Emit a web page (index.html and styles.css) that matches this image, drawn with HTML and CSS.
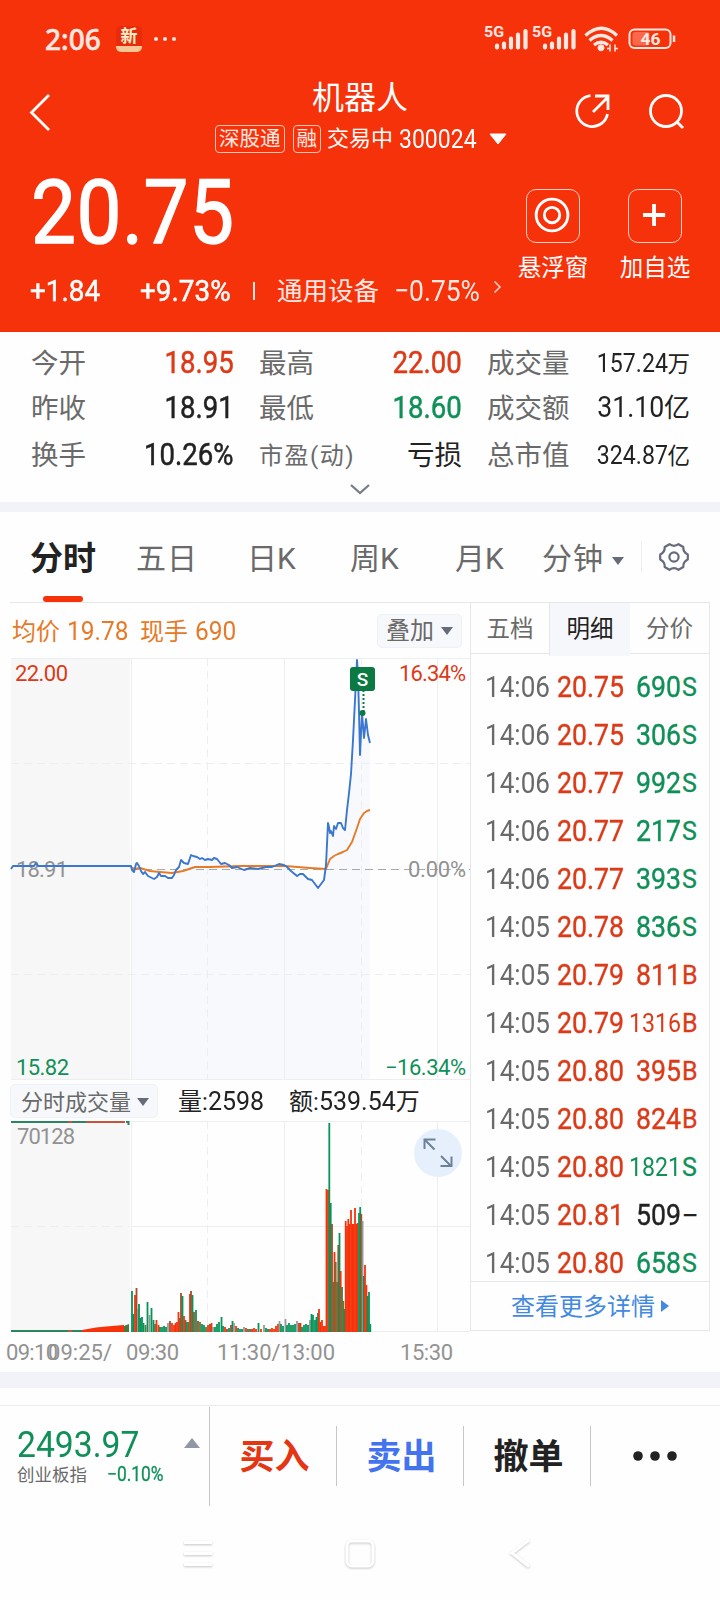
FILE: index.html
```html
<!DOCTYPE html>
<html lang="zh-CN">
<head>
    <meta charset="UTF-8">
    <meta name="viewport" content="width=device-width, initial-scale=1.0">
    <title>机器人 300024</title>
    <link rel="stylesheet" href="styles.css">
</head>
<body>
    <header class="header">
        <div class="status">
            <span class="clock">2:06</span>
            <span class="app-badge">新</span>
            <svg class="status-dots" width="24" height="6" viewBox="0 0 24 6"><circle cx="3" cy="3" r="2"/><circle cx="12" cy="3" r="2"/><circle cx="21" cy="3" r="2"/></svg>
            <svg class="status-icons" width="196" height="30" viewBox="0 0 196 30">
                <g id="signal">
                    <text x="0" y="13" font-size="14.500" font-weight="700" textLength="20" lengthAdjust="spacingAndGlyphs">5G</text>
                    <path d="M13 23.500v-2M20 23.500v-4M27 23.500v-9M34 23.500v-13M41.500 23.500v-16.500" stroke-width="4.200" stroke-linecap="round"/>
                </g>
                <use href="#signal" x="48"/>
                <g fill="none" stroke-width="3.300">
                    <path d="M101.500 11.500Q117.500-3 133 11.500M105.500 16.500q11.500-10 23 0M110 21q7-5.500 14 0"/>
                </g>
                <circle cx="117" cy="23.800" r="3"/>
                <path d="M126 20.500v7M131 20.500v7M123 24.500h3M131 24.500h3" stroke-width="1.500"/>
                <rect x="145.500" y="5.500" width="41" height="18.500" rx="5" fill="none" stroke-width="2"/>
                <rect x="148.500" y="8" width="17" height="13.500" rx="3" stroke="none" fill-opacity=".3"/>
                <path d="M190 11.500v6.500" stroke-width="2.500"/>
                <text x="156.500" y="21" font-size="17" font-weight="700" textLength="20" lengthAdjust="spacingAndGlyphs">46</text>
            </svg>
        </div>

        <div class="titlebar">
            <svg class="back" width="24" height="40" viewBox="0 0 24 40"><path d="M22 3 4.500 20.500 22 38"/></svg>
            <div class="title">
                <h1>机器人</h1>
                <div class="subtitle">
                    <span class="tag">深股通</span>
                    <span class="tag">融</span>
                    <span class="state">交易中</span>
                    <span class="code">300024</span>
                    <svg width="18" height="12" viewBox="0 0 18 12"><path d="M1 1h16l-8 10z" fill="#fff" stroke="#fff" stroke-linejoin="round"/></svg>
                </div>
            </div>
            <div class="title-icons">
                <svg width="36" height="36" viewBox="0 0 36 36"><path d="M15.500 1.700A15.500 15.500 0 1 0 32.500 20M18 18 32 4M20 2h13v14"/></svg>
                <svg width="36" height="36" viewBox="0 0 36 36"><circle cx="17" cy="17" r="15.500"/><path d="m28 28 6 6"/></svg>
            </div>
        </div>

        <div class="quote">
            <div class="quote-main">
                <div class="price">20.75</div>
                <div class="change">
                    <span class="up1"><b class="num">+1.84</b></span>
                    <span class="up2"><b class="num">+9.73%</b></span>
                    <i class="bar"></i>
                    <span class="sector">通用设备</span>
                    <span class="sector-pct"><span class="num">−0.75%</span></span>
                    <svg width="9" height="14" viewBox="0 0 9 14"><path d="m1.500 1.500 5.500 5.500-5.500 5.500" fill="none" stroke="#ffd0c6" stroke-width="1.600"/></svg>
                </div>
            </div>
            <div class="actions">
                <div class="action">
                    <svg width="54" height="54" viewBox="0 0 54 54"><circle cx="26" cy="26" r="16.500"/><circle cx="26" cy="26" r="8"/></svg>
                    <span>悬浮窗</span>
                </div>
                <div class="action">
                    <svg width="54" height="54" viewBox="0 0 54 54"><path d="M14.500 26h23M26 14.500v23" stroke-width="4"/></svg>
                    <span>加自选</span>
                </div>
            </div>
        </div>
    </header>

    <section class="stats">
        <div class="stat"><label>今开</label><b class="num red">18.95</b></div>
        <div class="stat"><label>最高</label><b class="num red">22.00</b></div>
        <div class="stat"><label>成交量</label><span class="small"><i class="num">157.24</i>万</span></div>
        <div class="stat"><label>昨收</label><b class="num">18.91</b></div>
        <div class="stat"><label>最低</label><b class="num green">18.60</b></div>
        <div class="stat"><label>成交额</label><span class="mid"><i class="num">31.10</i>亿</span></div>
        <div class="stat"><label>换手</label><b class="num">10.26%</b></div>
        <div class="stat"><label class="pe">市盈(动)</label><span>亏损</span></div>
        <div class="stat"><label>总市值</label><span class="small"><i class="num">324.87</i>亿</span></div>
    </section>
    <div class="expand">
        <svg width="22" height="12" viewBox="0 0 22 12"><path d="m2 2 9 8 9-8" fill="none" stroke="#777b88" stroke-width="2.200"/></svg>
    </div>

    <nav class="tabs">
        <span class="tab active">分时</span>
        <span class="tab">五日</span>
        <span class="tab">日K</span>
        <span class="tab">周K</span>
        <span class="tab">月K</span>
        <span class="tab minute">分钟 <i class="caret"></i></span>
        <span class="gear">
            <svg width="30" height="30" viewBox="0 0 30 30" fill="none" stroke="#666b7a" stroke-width="2.200" stroke-linejoin="round">
                <path d="M10.500 2.200q4.500 3.200 9 0l4.800 2.800q-.4 5.200 4.500 7.500v5q-4.900 2.300-4.500 7.500l-4.800 2.800q-4.500-3.200-9 0L5.700 25q.4-5.200-4.500-7.500v-5Q6.100 10.200 5.700 5z"/>
                <circle cx="15" cy="15" r="4.600"/>
            </svg>
        </span>
    </nav>

    <main class="board">
        <div class="charts">
            <div class="chart-head">
                <span class="avg">均价 <i class="num">19.78</i></span>
                <span class="avg">现手 <i class="num">690</i></span>
                <span class="chip overlay">叠加 <i class="caret"></i></span>
            </div>

            <svg class="chart" width="460" height="423" viewBox="10 658 460 423">
                <rect x="11" y="658" width="119" height="422" fill="#f7f7f7"/>
                <path id="area" fill="#f7f9fd"/>
                <g class="grid">
                    <path d="M11 658.500H470M11 1079.500H470M131.500 658V1079M284.500 658V1079M437.500 658V1079"/>
                    <path class="dash" d="M11 763.500H470M11 974.500H470M207.500 658V1079M361.500 658V1079"/>
                </g>
                <path class="middle" d="M131 869.500H470"/>
                <g class="axis">
                    <text class="red" x="15" y="681" textLength="53">22.00</text>
                    <text class="red" x="399" y="681" textLength="67">16.34%</text>
                    <text x="16" y="877" textLength="52">18.91</text>
                    <text x="408" y="877" textLength="58">0.00%</text>
                    <text class="green" x="16" y="1075" textLength="53">15.82</text>
                    <text class="green" x="385" y="1075" textLength="81">−16.34%</text>
                </g>
                <polyline class="line average" points="131,867 135,869 140,868 150,871 160,872 172,873 183,871 195,867 210,867 240,866 285,866 310,868 326,869 330,859 334,856 338,854 343,852 347,850 352,842 357,828 360,819 364,813 367,811 370,810"/>
                <polyline id="price" class="line"/>
                <path d="M363.500 690v22" stroke="#0a7a42" stroke-width="2" stroke-dasharray="2 2"/>
                <circle cx="362.500" cy="713" r="3" fill="#0a7a42"/>
                <rect x="350" y="667" width="25" height="24" rx="3" fill="#0a7a42"/>
                <text class="marker" x="362.500" y="686" text-anchor="middle">S</text>
            </svg>

            <div class="volume-head">
                <span class="chip">分时成交量 <i class="caret"></i></span>
                <span class="vol">量:<i class="num">2598</i></span>
                <span class="amount">额:<i class="num">539.54</i>万</span>
            </div>

            <svg class="volume" width="470" height="251" viewBox="0 1121 470 251">
                <rect x="11" y="1121" width="119" height="211" fill="#f7f7f7"/>
                <g class="grid">
                    <path d="M11 1121.500H470M131 1226.500H470M11 1331.500H470M131.500 1121V1331M284.500 1121V1331M437.500 1121V1331"/>
                    <path class="dash" d="M11 1226.500H130M207.500 1121V1331M361.500 1121V1331"/>
                </g>
                <path d="M11 1122h57M72 1122h14M126 1122h2.500v3M11 1331h57M72 1331h12" fill="none" stroke="#2a8560" stroke-width="2"/>
                <path d="M68 1122h4M86 1122h39M68 1331h4" fill="none" stroke="#c4553a" stroke-width="2"/>
                <path d="M82 1332v-2l14-2.500 10-1 18-1.500v7z" fill="#f6320b"/>
                <path d="M124 1332v-6l5-2v8z" fill="#4d7540"/>
                <g id="bars"></g>
                <circle cx="438" cy="1153" r="24" fill="#e6f0fc"/>
                <path d="m434.500 1149.500-10-10M424.500 1149v-9.500h11M441 1156l10 10M451.500 1156.500v9.500h-11" fill="none" stroke="#6d8199" stroke-width="2"/>
                <g class="axis">
                    <text x="17" y="1144" textLength="58">70128</text>
                    <text x="6" y="1360" textLength="52">09:10</text>
                    <text x="48" y="1360" textLength="64">09:25/</text>
                    <text x="126" y="1360" textLength="53">09:30</text>
                    <text x="217" y="1360" textLength="118">11:30/13:00</text>
                    <text x="400" y="1360" textLength="53">15:30</text>
                </g>
            </svg>
        </div>

        <aside class="ticks">
            <div class="tick-tabs"><span>五档</span><span class="active">明细</span><span>分价</span></div>
            <div class="tick-list" id="ticks"></div>
            <div class="more">查看更多详情 <i></i></div>
        </aside>
    </main>

    <footer class="footer">
        <div class="index">
            <div class="index-value"><span class="num">2493.97</span><i></i></div>
            <div class="index-name">创业板指 <span class="num">−0.10%</span></div>
        </div>
        <div class="trade buy">买入</div>
        <div class="trade sell">卖出</div>
        <div class="trade">撤单</div>
        <div class="trade"><svg width="46" height="12" viewBox="0 0 46 12" fill="#222"><circle cx="6" cy="6" r="4.800"/><circle cx="23" cy="6" r="4.800"/><circle cx="40" cy="6" r="4.800"/></svg></div>
    </footer>

    <div class="sysnav">
        <svg width="30" height="32" viewBox="0 0 30 32"><path d="M1 4.500h28M1 15.500h28M1 26.500h28"/></svg>
        <svg width="30" height="32" viewBox="0 0 30 32"><rect x="2" y="3" width="26" height="25" rx="5"/></svg>
        <svg width="30" height="32" viewBox="0 0 30 32"><path d="M20 2 3 15 20 28.500"/></svg>
    </div>

    <script>
        // --- Price line ---
        const prices = '11,869 13,866 34,866 36,863 38,866 130,866 131,866 132,870 134,872 136,864 137,863 139,866 141,871 143,874 145,872 148,876 152,878 154,879 157,877 159,873 161,876 165,876 168,878 172,878 174,875 176,870 179,867 181,860 184,863 188,864 191,855 193,856 197,857 200,859 202,858 205,860 208,859 212,860 214,858 217,859 221,864 225,863 229,865 232,868 237,867 244,870 250,868 258,869 266,867 272,867 279,864 284,865 287,867 291,871 297,876 300,874 303,874 308,879 312,880 315,884 318,888 321,884 324,880 326,865 328,823 329,827 330,833 331,831 333,836 334,826 336,829 338,823 341,823 343,828 345,830 347,810 349,793 351,774 353,740 355,700 357,660 358,675 359,712 360,755 362,713 364,738 366,719 368,735 370,743';
        document.getElementById('price').setAttribute('points', prices);
        document.getElementById('area').setAttribute('d', 'M131 1079 131 866 ' + prices.slice(prices.indexOf('131,')) + ' 370 1079Z');

        // --- Volume bars: x, height, color ---
        const colors = { r: '#f6320b', g: '#069458', d: '#5e773c', b: '#a94a25', y: '#999' };
        const volumes = '132,41,g 133.500,18,g 135,37,r 136.500,44,b 138,23,y 139,28,g 140.500,14,g 142,15,g 143.500,9,g 145.500,7,d 147.500,30,g 149.500,17,y 151.500,24,g 153.500,12,g 155,8,d 156.500,12,r 158.500,7,r 160,5,g 162,5,g 164,6,g 166,5,g 168,9,y 170,11,b 172,9,r 174,7,r 175.500,9,r 177,10,r 178.500,20,r 180,14,b 181,39,b 182.500,36,g 184,16,r 185.500,12,b 187,10,g 188.500,10,d 190,38,r 191,41,b 192.500,37,g 194,20,b 196,22,g 198,11,b 200,10,d 202,8,g 204,7,g 206,5,d 208,7,r 210,8,b 211.500,9,r 213,5,y 215,5,g 217,8,g 219,10,g 221.500,15,g 223,6,g 225,5,r 227,3,b 229,4,g 231,7,b 232.500,11,g 234,9,y 236,6,r 238,4,g 240,3,g 242,3,g 244,5,y 246,4,r 248,3,g 250,3,b 252,3,b 254,4,r 256,3,r 258.500,9,g 261,3,r 264,7,y 266,4,g 268,3,g 270,3,r 272,4,r 274,3,r 276,6,r 278,8,r 279.500,11,y 281,8,g 283,6,g 285.500,13,y 287,7,g 289,9,g 291,7,g 293,7,g 295,8,g 297,11,y 299,9,b 300.500,9,r 302,5,g 304,7,g 306,8,g 308,7,g 310,12,y 311.500,18,g 313,17,g 315,12,g 316.500,15,g 318,19,g 319,23,r 320.500,10,r 322,12,r 323.500,6,r 325,6,r 326.500,143,r 328,142,r 329.300,209,g 330.700,129,g 332,108,b 333.300,50,d 334.500,80,r 335.700,70,d 337,50,d 338.300,87,b 339.500,99,g 340.700,61,r 342,45,g 343.300,31,d 344.500,23,g 345.700,111,r 347,106,r 348.300,113,r 349.500,108,r 351,122,r 352.300,108,r 353.600,108,r 355,124,r 356.300,108,r 357.600,109,r 359,119,g 360.200,125,g 361.300,118,b 362.600,111,y 363.800,56,g 365,67,r 366.400,47,r 367.700,36,g 369,40,g 370.300,8,g';
        document.getElementById('bars').innerHTML = volumes.split(' ').map(v => {
            const [x, h, c] = v.split(',');
            return `<rect x="${x - 0.9}" y="${1332 - h}" width="1.800" height="${h}" fill="${colors[c]}"/>`;
        }).join('');

        // --- Tick list ---
        const ticks = [
            ['14:06', '20.75', '690', 'S'],
            ['14:06', '20.75', '306', 'S'],
            ['14:06', '20.77', '992', 'S'],
            ['14:06', '20.77', '217', 'S'],
            ['14:06', '20.77', '393', 'S'],
            ['14:05', '20.78', '836', 'S'],
            ['14:05', '20.79', '811', 'B'],
            ['14:05', '20.79', '1316', 'B'],
            ['14:05', '20.80', '395', 'B'],
            ['14:05', '20.80', '824', 'B'],
            ['14:05', '20.80', '1821', 'S'],
            ['14:05', '20.81', '509', '–'],
            ['14:05', '20.80', '658', 'S']
        ];
        const sides = { S: 'green', B: 'red' };
        document.getElementById('ticks').innerHTML = ticks.map(([time, price, count, side]) => `
            <div class="tick">
                <span class="num">${time}</span>
                <span class="num red medium">${price}</span>
                <span class="num count medium ${sides[side] || 'black'} ${count.length > 3 ? 'long' : ''}">${count}</span>
                <span class="side ${sides[side] || 'black'}">${side}</span>
            </div>`).join('');
    </script>
</body>
</html>
```
FILE: styles.css
```css
* {
    box-sizing: border-box;
}

body {
    margin: 0;
    width: 720px;
    height: 1600px;
    overflow: hidden;
    background-color: #fefefe;
    color: #222;
    font-family: Roboto, "Noto Sans CJK SC", sans-serif;
    line-height: 1;
}

i {
    font-style: normal;
}

/* narrow figures */
.num {
    display: inline-block;
    font-weight: 400;
    transform: scaleX(0.89);
    transform-origin: left center;
}

.medium {
    -webkit-text-stroke: 0.4px;
}

.red {
    color: #dc3a18;
    fill: #dc3a18;
}

.green {
    color: #109058;
    fill: #109058;
}

.black {
    color: #222;
}

.caret {
    display: inline-block;
    border: 6px solid transparent;
    border-top: 8px solid #666b7a;
    border-bottom: 0;
}

/* --- Header --- */
.header {
    height: 332px;
    background-color: #f6320b;
    color: #fff;
}

.status {
    display: flex;
    align-items: center;
    height: 78px;
    padding: 0 40px 0 45px;
    color: #ffe8e2;
}

.clock {
    width: 71px;
    font-family: "Noto Sans", sans-serif;
    font-size: 28px;
    font-weight: 500;
    -webkit-text-stroke: 0.5px;
}

.app-badge {
    width: 26px;
    height: 26px;
    border-radius: 5px;
    border-bottom: 6px solid #f9c795;
    background-color: #e92b0d;
    color: #fff0c8;
    font-size: 17px;
    font-weight: 700;
    line-height: 20px;
    text-align: center;
}

.status-dots {
    margin-left: 11px;
    fill: #ffe8e2;
}

.status-icons {
    margin-left: auto;
    fill: #ffe8e2;
    stroke: #ffe8e2;
}

.status-icons text {
    stroke: none;
}

.titlebar {
    display: grid;
    grid-template-columns: 200px 320px 200px;
    height: 84px;
}

.titlebar svg {
    fill: none;
    stroke: #fff;
    stroke-width: 2.8;
}

.back {
    margin: 14px 0 0 27px;
}

.title h1 {
    margin: 4px 0 0;
    font-size: 32px;
    font-weight: 400;
    line-height: 32px;
    text-align: center;
}

.subtitle {
    display: flex;
    align-items: center;
    margin: 11px 0 0 15px;
    white-space: nowrap;
}

.tag {
    height: 28px;
    margin-right: 8px;
    padding: 0 3px;
    border: 1px solid #ffc2b3;
    border-radius: 4px;
    color: #ffe8e2;
    font-size: 20.5px;
    line-height: 27px;
}

.state {
    margin-left: -2px;
    font-size: 22px;
}

.code {
    width: 90px;
    margin-left: 6px;
    font-size: 25px;
    transform: scaleX(0.92);
    transform-origin: left;
}

.title .subtitle svg {
    stroke-width: 1;
}

.title-icons {
    display: flex;
    gap: 38px;
    padding: 16px 0 0 55px;
}

.quote {
    display: flex;
}

.quote-main {
    width: 502px;
}

.price {
    margin: 2px 0 0 31px;
    font-size: 89px;
    font-weight: 400;
    letter-spacing: 0.5px;
    line-height: 97px;
    transform: scaleX(0.9);
    transform-origin: left;
    -webkit-text-stroke: 1.4px;
}

.change {
    display: flex;
    align-items: center;
    margin-top: 13px;
    height: 34px;
    padding-left: 30px;
    font-size: 30px;
    white-space: nowrap;
}

.up1 {
    width: 110px;
}

.up2 {
    width: 114px;
}

.change b.num {
    transform: scaleX(0.93);
    -webkit-text-stroke: 0.5px;
}

.bar {
    width: 2px;
    height: 18px;
    margin-right: 22px;
    background-color: #ffe8e2;
}

.sector {
    width: 118px;
    color: #ffe8e2;
    font-size: 25.5px;
    line-height: 32px;
}

.sector-pct {
    width: 99px;
    color: #ffe8e2;
}

.sector-pct .num {
    transform: scaleX(0.88);
}

.change svg {
    margin-top: -9px;
}

.actions {
    display: flex;
    padding-top: 27px;
}

.action {
    display: flex;
    flex-direction: column;
    align-items: center;
    width: 102px;
    gap: 14px;
    font-size: 23.5px;
}

.action svg {
    border: 1px solid #ffd0c6;
    border-radius: 10px;
    fill: none;
    stroke: #fff;
    stroke-width: 3;
}

/* --- Stats --- */
.stats {
    display: grid;
    grid-template-columns: repeat(3, 203px);
    grid-template-rows: 44px 46px 46px;
    column-gap: 25px;
    height: 144px;
    padding: 8px 30px 0 31px;
}

.stat {
    display: flex;
    align-items: center;
    justify-content: space-between;
    font-size: 27.5px;
}

.stat label,
.stat span {
    padding-top: 3px;
}

.stat:nth-child(n+7) {
    padding-top: 2px;
}

.stat label {
    color: #6a6a6a;
    font-size: 27.5px;
}

.stat .pe {
    font-size: 24px;
    letter-spacing: 1.5px;
}

.stat .num {
    transform-origin: right center;
}

.stat b.num {
    font-size: 31px;
    -webkit-text-stroke: 0.5px;
}

.stat .small {
    padding-top: 1px;
    font-size: 22.5px;
}

.small .num {
    font-size: 26px;
}

.stat .mid {
    padding-top: 0;
    font-size: 26px;
}

.mid .num {
    font-size: 30px;
}

.expand {
    height: 36px;
    padding-top: 7px;
    border-bottom: 10px solid #f2f3f8;
}

.expand svg {
    display: block;
    margin: 0 auto;
}

/* --- Tabs --- */
.tabs {
    display: grid;
    grid-template-columns: 106px 107px 107px 105px 83px 112px 70px;
    height: 91px;
    margin: 0 10px;
    border-bottom: 1px solid #e4e8ea;
    color: #6a6a6a;
    font-size: 30px;
    line-height: 94px;
}

.tab {
    padding-left: 20px;
    white-space: nowrap;
}

.tab:nth-child(2) {
    letter-spacing: 1px;
}

.tab:nth-child(3) {
    padding-left: 24px;
}

.tab.active {
    display: flex;
    flex-direction: column;
    height: 90px;
    color: #222;
    font-size: 33px;
    font-weight: 700;
    line-height: 94px;
}

.tab.active::after {
    content: "";
    flex-shrink: 0;
    width: 40px;
    height: 6px;
    margin: -10px 0 0 13px;
    border-radius: 3px;
    background-color: #f6320b;
}

.tab.minute {
    padding-left: 24px;
    letter-spacing: 1px;
}

.minute .caret {
    margin-bottom: 4px;
}

.gear {
    display: flex;
    align-items: center;
    height: 30px;
    margin: 30px 0 0 11px;
    padding-left: 17px;
    border-left: 1px solid #eceef2;
}

/* --- Charts --- */
.board {
    display: flex;
    height: 769px;
}

.charts {
    width: 470px;
}

.chart-head {
    display: flex;
    align-items: center;
    height: 55px;
    padding: 0 8px 0 12px;
}

.avg {
    width: 128px;
    color: #e67a27;
    font-size: 24px;
    white-space: nowrap;
}

.avg .num {
    margin-left: 1px;
    font-size: 26px;
    transform: scaleX(0.94);
}

.chip {
    height: 34px;
    padding: 0 8px;
    border: 1px solid #eef1f5;
    border-radius: 5px;
    background-color: #f7f8fb;
    color: #6a6a6a;
    font-size: 24px;
    line-height: 32px;
    white-space: nowrap;
}

.chip .caret {
    margin: 0 0 4px 1px;
}

.overlay {
    margin-left: auto;
}

.chart {
    display: block;
    margin-left: 10px;
}

.grid {
    fill: none;
    stroke: #ecefef;
}

.dash {
    stroke-dasharray: 8 5;
}

.middle {
    fill: none;
    stroke: #aaa;
    stroke-dasharray: 8 5;
}

.line {
    fill: none;
    stroke: #3b76cf;
    stroke-width: 1.9;
    stroke-linejoin: round;
}

.average {
    stroke: #e67a27;
}

.axis text {
    font-size: 22px;
}

.axis text:not(.red):not(.green) {
    fill: #929292;
}

.marker {
    fill: #fff;
    font-size: 19px;
    font-weight: 500;
}

.volume-head {
    display: flex;
    align-items: center;
    height: 40px;
    padding-left: 10px;
    font-size: 24px;
    white-space: nowrap;
}

.volume-head .chip {
    width: 148px;
    padding: 0 10px;
    font-size: 22px;
    line-height: 35px;
}

.vol {
    width: 111px;
    margin-left: 20px;
}

.volume-head .num {
    font-size: 26px;
    transform: scaleX(0.96);
}

.amount .num {
    margin-right: -3px;
}

.volume {
    display: block;
}

/* --- Ticks --- */
.ticks {
    width: 240px;
    height: 728px;
    border: 1px solid #e4e8ea;
    border-top: 0;
}

.tick-tabs {
    display: grid;
    grid-template-columns: 78px 81px 79px;
    height: 51px;
    border-bottom: 1px solid #e4e8ea;
    color: #6a6a6a;
    font-size: 23.5px;
    line-height: 53px;
    text-align: center;
}

.tick-tabs .active {
    border-left: 1px solid #e4e8ea;
    background-color: #f6f7fa;
    color: #222;
}

.tick-list {
    height: 628px;
    padding: 9px 12px 0 14px;
    border-bottom: 1px solid #e4e8ea;
}

.tick {
    display: grid;
    grid-template-columns: 72px 72px 52px 16px;
    align-items: center;
    height: 48px;
    color: #6a6a6a;
    font-size: 30px;
}

.tick > .num:first-child {
    transform: scaleX(0.87);
}

.tick .count {
    text-align: right;
    transform-origin: right;
}

.tick .long {
    font-size: 26px;
    margin-left: -12px;
    -webkit-text-stroke: 0;
}

.side {
    padding-left: 1px;
    font-size: 25px;
    -webkit-text-stroke: 0.3px;
}

.tick .red {
    color: #dc3a18;
}

.tick .green {
    color: #109058;
}

.tick .black {
    color: #222;
}

.more {
    height: 48px;
    color: #4389e0;
    font-size: 24px;
    line-height: 51px;
    text-align: center;
}

.more i {
    display: inline-block;
    margin-bottom: 3px;
    border: 6px solid transparent;
    border-left: 8px solid #4389e0;
    border-right: 0;
}

/* --- Footer --- */
.footer {
    display: flex;
    height: 135px;
    border-top: 16px solid #f2f3f8;
    padding-top: 19px;
    background: linear-gradient(#ececec, #ececec) 0 17px / 100% 1px no-repeat;
}

.index {
    width: 210px;
    height: 99px;
    padding: 19px 8px 0 17px;
    border-right: 1px solid #c6c6c6;
}

.index-value {
    display: flex;
    justify-content: space-between;
    height: 38px;
    color: #109058;
    font-size: 37px;
}

.index-value .num {
    transform: scaleX(0.91);
}

.index-value i {
    height: 0;
    margin: 12px 1px 0 -10px;
    border: 8px solid transparent;
    border-bottom: 10px solid #9098a5;
    border-top: 0;
}

.index-name {
    color: #6a6a6a;
    font-size: 17.5px;
    white-space: nowrap;
}

.index-name .num {
    margin-left: 16px;
    color: #109058;
    font-size: 20px;
    transform: scaleX(0.87);
    -webkit-text-stroke: 0.3px;
}

.trade {
    display: flex;
    align-items: center;
    justify-content: center;
    width: 127px;
    height: 60px;
    margin-top: 19px;
    padding: 3px 0 0 3px;
    border-right: 1px solid #c6c6c6;
    font-size: 35px;
    font-weight: 700;
}

.trade:last-child {
    padding: 0;
    border-right: 0;
}

.buy {
    color: #e53512;
}

.sell {
    color: #4373ed;
}

.sysnav {
    display: grid;
    grid-template-columns: 162px 164px 30px;
    padding: 31px 0 0 183px;
}

.sysnav svg {
    fill: none;
    stroke: #fff;
    stroke-width: 3;
    filter: drop-shadow(0 1px 1px rgba(0, 0, 0, 0.22));
}
```
